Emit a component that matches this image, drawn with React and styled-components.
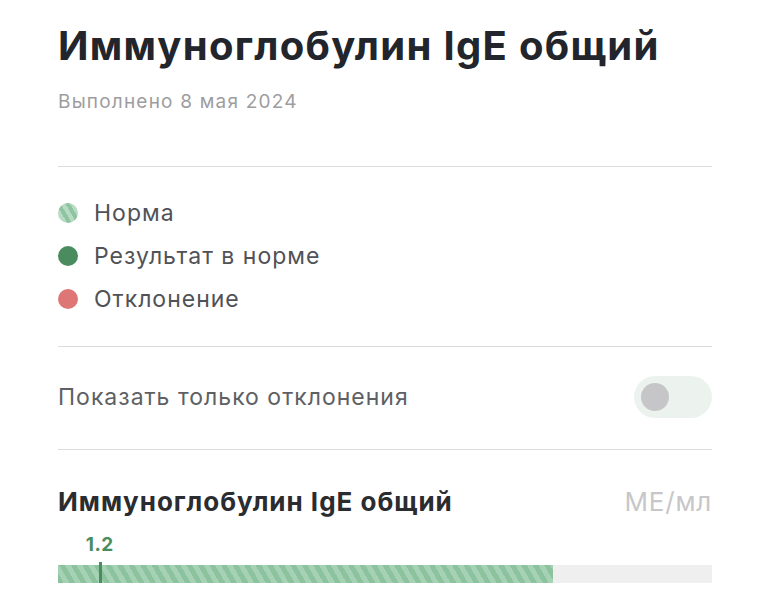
import styled, { createGlobalStyle } from "styled-components";

const GlobalStyle = createGlobalStyle`
    body {
        margin: 0;
        background: #ffffff;
        font-family: Inter, "Noto Sans", sans-serif;
    }
`

const legend = [
    { label: "Норма", kind: "norm" },
    { label: "Результат в норме", kind: "ok" },
    { label: "Отклонение", kind: "bad" },
]

export default function App() {
    // позиция значения и границы нормы на шкале, в процентах
    const markerPos = 6.4
    const normEnd = 75.7

    return (
        <Page>
            <GlobalStyle />
            <Header>
                <Title>Иммуноглобулин IgE общий</Title>
                <Subtitle>Выполнено 8 мая 2024</Subtitle>
            </Header>
            <Divider />
            <Legend>
                {legend.map((l) => (
                    <LegendItem key={l.label}>
                        <Dot kind={l.kind} />
                        {l.label}
                    </LegendItem>
                ))}
            </Legend>
            <Divider />
            <FilterRow>
                <FilterLabel>Показать только отклонения</FilterLabel>
                <Toggle>
                    <Knob />
                </Toggle>
            </FilterRow>
            <Divider />
            <Result>
                <ResultHead>
                    <ResultName>Иммуноглобулин IgE общий</ResultName>
                    <Unit>МЕ/мл</Unit>
                </ResultHead>
                <Scale>
                    <ValueLabel style={{ left: `${markerPos}%` }}>1.2</ValueLabel>
                    <Track>
                        <NormRange style={{ width: `${normEnd}%` }} />
                        <Marker style={{ left: `${markerPos}%` }} />
                    </Track>
                </Scale>
            </Result>
        </Page>
    )
}

const Page = styled.div`
    width: 654px;
    padding: 22px 57px 0 58px;
`

const Header = styled.header`
    padding-bottom: 53px;
`

const Title = styled.h1`
    margin: 0;
    font-size: 40px;
    font-weight: 700;
    line-height: 48px;
    color: #22252b;
    letter-spacing: 1.3px;
`

const Subtitle = styled.div`
    margin-top: 20px;
    font-size: 19px;
    line-height: 23px;
    color: #9d9d9f;
    letter-spacing: 1.2px;
`

const Divider = styled.hr`
    margin: 0;
    border: none;
    height: 1px;
    background: #dcdcdc;
`

const Legend = styled.ul`
    list-style: none;
    margin: 0;
    padding: 32px 0 33px;
    display: flex;
    flex-direction: column;
    gap: 15px;
`

const LegendItem = styled.li`
    display: flex;
    align-items: center;
    gap: 16px;
    font-size: 23px;
    line-height: 28px;
    letter-spacing: 1px;
    color: #505257;
`

const Dot = styled.span`
    width: 20px;
    height: 20px;
    border-radius: 50%;
    flex-shrink: 0;
    background: ${(p) =>
        p.kind === "norm" ? `repeating-linear-gradient(60deg, #8fc3a2 0 4px, #b7dac3 4px 8px)` :
        p.kind === "ok" ? "#4a8c5e" : "#de7676"};
`

const FilterRow = styled.div`
    display: flex;
    align-items: center;
    justify-content: space-between;
    padding: 29px 0 31px;
`

const FilterLabel = styled.span`
    font-size: 23px;
    letter-spacing: 1px;
    color: #5e6064;
`

const Toggle = styled.div`
    width: 78px;
    height: 42px;
    border-radius: 21px;
    background: #ecf3ef;
    display: flex;
    align-items: center;
    padding: 0 7px;
    box-sizing: border-box;
`

const Knob = styled.span`
    width: 28px;
    height: 28px;
    border-radius: 50%;
    background: #c6c6c8;
`

const Result = styled.section`
    padding-top: 36px;
`

const ResultHead = styled.div`
    display: flex;
    justify-content: space-between;
    align-items: baseline;
`

const ResultName = styled.h2`
    margin: 0;
    font-size: 26px;
    line-height: 32px;
    font-weight: 700;
    letter-spacing: 1px;
    color: #2a2c30;
`

const Unit = styled.span`
    font-size: 26px;
    letter-spacing: 0.8px;
    color: #c7c7c9;
`

const Scale = styled.div`
    position: relative;
    padding-top: 47px;
`

const ValueLabel = styled.span`
    position: absolute;
    top: 15px;
    transform: translateX(-50%);
    font-size: 19px;
    line-height: 23px;
    font-weight: 700;
    letter-spacing: 0.5px;
    color: #4a8c5e;
`

const Track = styled.div`
    position: relative;
    height: 18px;
    background: #efefef;
`

const NormRange = styled.div`
    height: 100%;
    background: repeating-linear-gradient(60deg, #8dc29f 0 5px, #a5d2b5 5px 10px);
`

const Marker = styled.span`
    position: absolute;
    top: -3px;
    width: 3px;
    height: 29px;
    margin-left: -1px;
    background: #4a8c5e;
`
